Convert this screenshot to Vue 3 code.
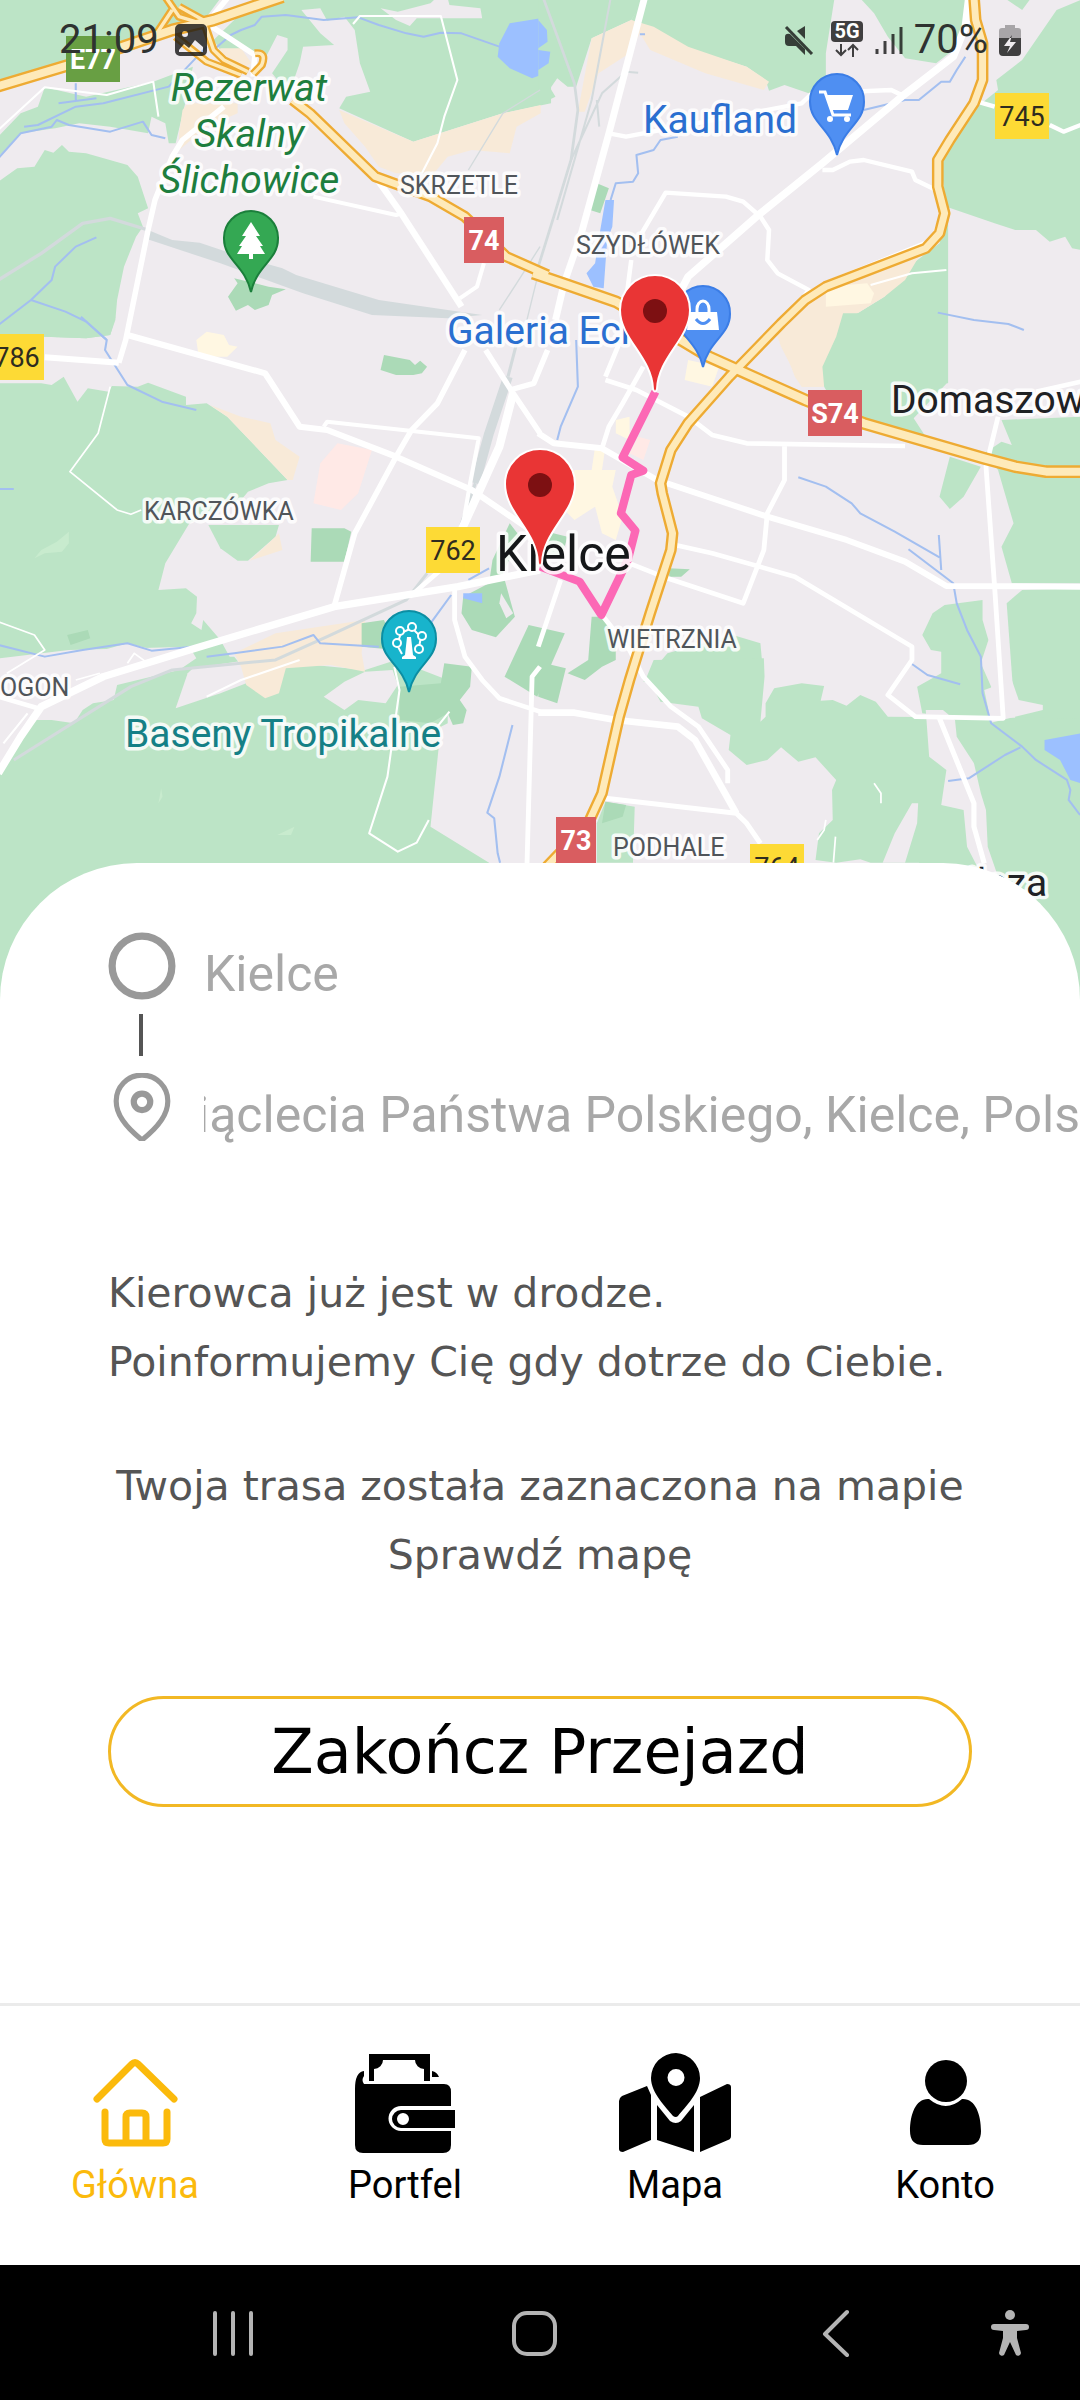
<script setup>
import { ref } from 'vue'

const pickup = ref('Kielce')
const destination = ref('iąclecia Państwa Polskiego, Kielce, Polska')

// Map geometry is stored per tile; each tile has its own origin and scale.
const tiles = {
  a: 'matrix(.3444 0 0 .3333 0 0)',
  b: 'matrix(.3444 0 0 .3333 540 0)',
  c: 'matrix(.3444 0 0 .3333 0 320)',
  d: 'matrix(.3444 0 0 .3333 540 320)',
  e: 'matrix(.3444 0 0 .3333 0 660)',
  f: 'matrix(.3444 0 0 .3333 540 660)',
}

const areas = [
  // north-west
  ['a', 'park', 'M-5-5H640L600 50 480 90 190 200-5 270Z'],
  ['a', 'park', 'M620 120L700 40 820-5H1600V310L1460 340 1200 425 985 325 1005 290 1075 275 1045 190 1030 90 1000 50 950 62 930 25 875 30 930 100 970 135 880 140 870 190 850 250 810 245 790 220 835 150V115L805 105 765 185 730 150H640Z'],
  ['a', 'land', 'M1105 25L1155 35 1250 10 1265-5H1300L1305 15 1395 25 1400 55H1210L1190 78 1150 60Z'],
  ['a', 'park', 'M-5 410L60 340 110 320 130 262 250 290 445 245 560 200 540 300 510 430H490L480 370 440 350 430 400 320 380 230 370 160 385 60 400-5 470Z'],
  ['a', 'park', 'M-5 545L50 505 100 500 130 450 155 458 180 435 200 455 250 460 370 495 400 530 430 625 400 640 415 680 395 710 360 800 340 900 335 960 320 1005 250 1015 130 1010-5 1020Z'],
  ['a', 'sand', 'M530 330L545 310H690V340L600 380 520 450V400ZM640 145H700L730 190 700 205 620 190Z'],
  ['a', 'sand', 'M985 330L1200 425 1460 340 1570 315V340L1500 380 1480 460 1370 450 1300 470 1260 520H1150L1100 500 1060 440 1000 370Z'],
  ['a', 'wood', 'M690 850L680 835 780 860 830 868 790 885 780 915 740 930 720 915 685 932 662 890Z'],
  ['a', 'water', 'M1480 70L1570 55V225L1545 235 1480 205 1445 170 1450 130Z'],
  ['a', 'yard', 'M430 690L500 720 580 728 700 770 820 805 860 825 1100 900 1300 930 1400 945 1300 955 1080 945 880 880 640 790 420 715Z'],
  // north-east
  ['b', 'park', 'M-5-5H305L265 60 150 115 105 260 80 260 50 235 30 265 45 290-5 315Z'],
  ['b', 'park', 'M300-5H855L830 160V270L780 280 710 255 665 272 655 240 600 200 430 145 330 95 265 60Z'],
  ['b', 'sand', 'M265 60L330 80 430 140 600 200 665 245 650 270 480 220 320 150 290 100 260 160 170 220 130 335H110L150 115Z'],
  ['b', 'water', 'M-5 60L20 90 22 125-5 145ZM-5 150L30 155 25 190-5 210Z'],
  ['b', 'park', 'M930-5H1240V60L1200 150 1150 190 1060 175 1010 110 970 40ZM1350-5H1425L1400 30Z'],
  ['b', 'park', 'M1570 0L1500 30 1400 180 1325 240 1330 270 1270 320 1190 430 1165 500 1180 620 1320 670 1380 690H1440L1480 725 1525 710 1545 745 1570 750Z'],
  ['b', 'wood', 'M165 550L200 565 175 640 145 630Z'],
  ['b', 'park', 'M1185 640V1150L860 1150 870 1010 890 960 1000 890 1070 800 1160 730Z'],
  ['b', 'sand', 'M800 870L1100 770 1060 840 1000 890 890 960 865 1100 820 1160H760L700 1040 680 980Z'],
  ['b', 'shop', 'M830 860L950 850 970 880 960 910 830 920Z'],
  ['b', 'water', 'M190 600H215L210 680 195 720 185 865 155 860 135 820 160 790 175 690Z'],
  // centre-west
  ['c', 'park', 'M-5-10H335L320 45 250 55 130 50-5 60Z'],
  ['c', 'park', 'M-5 190H120L150 195 185 170 225 245 255 205 315 215 325 198 400 200 430 188 540 230V255L600 250 660 290 835 480 780 490 720 515 700 540 550 610 480 730 460 810 540 805 572 830 570 880 555 910 585 930 590 900 640 960 680 1035 560 1030 550 1000 450 990 370 970 230 1010 200 1080H-5Z'],
  ['c', 'park', 'M605 615H810L800 650 720 722H690L640 685Z'],
  ['c', 'glade', 'M100 715L120 690 165 665 200 635V670L180 695 130 700Z'],
  ['c', 'wood', 'M905 625H1000L1020 635 1000 725H902ZM1115 105L1190 120 1205 135 1220 122 1240 140 1225 160 1200 165 1150 165 1105 150Z'],
  ['c', 'wood', 'M195 945L255 930 262 955 205 975Z'],
  ['c', 'sand', 'M610 255L700 290 785 310 800 360 870 410 850 480H835L660 290ZM810 640L820 690 725 722 790 660Z'],
  ['c', 'health', 'M980 370L1080 390 1040 520 990 570 910 550 930 430Z'],
  ['c', 'wood', 'M1480 610L1510 650 1460 760 1495 890 1440 952 1370 930 1340 880 1345 830 1420 790 1430 720Z'],
  ['c', 'land', 'M1455 820L1490 880 1470 895 1450 850Z'],
  ['c', 'water', 'M1345 820H1400V850L1345 835Z'],
  ['c', 'shop', 'M570 60L600 35 650 45 665 75 690 80 660 110H600L575 95Z'],
  ['e', 'park', 'M-5 0L560-10 680-10 720 40 830 20 860 10 1060 30 1150 0 1300 60 1300 190 1280 200 1250 500 1420 608V1100H-5Z'],
  ['e', 'land', 'M-5-5L200-30 550-40 570-5 520 30 340 75 330 120 270 130 240 150 215 190 150 180H100L-5 335Z'],
  ['e', 'land', 'M560 25L720 0 715 70 640 100 510 145 545 40Z'],
  ['c', 'sand', 'M680 1000L800 940 1060 900 1050 1000 1060 1055 960 1035 830 1045 810 1120 770 1135 715 1095 700 1040Z'],
  ['e', 'land', 'M1060 35L1140 30 1155 75 1120 130 1040 120 1000 150 940 110 1000 65Z'],
  ['c', 'wood', 'M1050 910L1115 900 1150 990 1050 980Z'],
  ['e', 'wood', 'M1160 80L1280 70 1290 10 1370 20 1365 80 1335 120 1355 150 1345 190 1315 195 1300 160 1250 190 1160 180Z'],
  ['c', 'wood', 'M1535 915L1640 940 1560 1130 1465 1070Z'],
  ['e', 'glade', 'M805 525L855 500 845 525ZM468 385L472 410 460 430Z'],
  // centre-east
  ['d', 'sand', 'M720 0H880L860 50 825 120V200H760L740 170 700 60Z'],
  ['d', 'park', 'M880-20H1181V190L1085 295 1120 350 870 280 825 200 820 140 860 50Z'],
  ['d', 'park', 'M1340 300L1570 290V790H1370L1340 680 1375 610 1330 450 1290 400 1340 365 1370 375ZM1190 410L1280 440 1230 530 1190 567 1160 530Z'],
  ['d', 'park', 'M1400 810L1570 805V1200H1380L1355 850Z'],
  ['d', 'park', 'M1175 855L1285 840V900L1302 960 1280 1030 1310 1100 1300 1200 1110 1180 1095 1100 1165 1060V995L1135 990 1110 945 1140 880Z'],
  ['d', 'park', 'M560 945L640 970 650 1085H300L370 1000Z'],
  ['d', 'wood', 'M150 890H190L220 930V1020L180 1040 130 1080 80 1060 140 1020ZM-5 1025L75 1045 50 1150-5 1130ZM375 745L435 748 410 770H375Z'],
  ['d', 'wood', 'M0 630L80 650 60 720 10 700Z'],
  ['d', 'shop', 'M100 450L220 450 210 500 240 590 220 660 180 640 160 560 100 600 60 560ZM430 120L520 140 500 200 420 180ZM220 300L260 290 260 360 220 340ZM160 380H190L180 450H150Z'],
  ['d', 'health', 'M285 350L320 360 300 420 260 400Z'],
  // south-east
  ['f', 'park', 'M330 0L650-5 652 50 640 185 655 170V130L680 85 760 70 825 78 815 122 850 120 890 137 930 105 975 125 1010 170 1600 175V1100H1200L1100 608H960L930 598 860 608 800 600 810 520 850 480 848 390 860 360 800 292 750 305 700 262 660 300 600 315 548 270 553 225 470 175 460 140 350 125 310 50Z'],
  ['f', 'land', 'M1120 150H1170L1205 180 1210 230 1260 310 1280 400 1295 450 1300 560 1330 650 1270 620 1240 560 1230 450 1165 435 1180 330 1130 290ZM1098 430L1095 490 1060 608H995L1030 520 1080 430ZM1290 90L1370 60 1390 120 1460 135V150L1310 188Z'],
  ['f', 'water', 'M1465 240L1570 220V370L1540 360 1510 300 1465 270Z'],
  ['f', 'park', 'M190 425L275 440 270 608H165V490Z'],
  ['f', 'wood', 'M190 425L250 435 240 470 180 490Z'],
]

const lines = [
  ['a', 'rail', 10, 'M-5 840L120 760 240 670 320 655 430 690'],
  ['b', 'rail', 8, 'M10-5L100 250 110 330 90 480 40 650-5 800'],
  ['b', 'rail', 6, 'M205-5L150 300 50 660M90 480L180 280 250 215 285 218M165 300L172 380'],
  ['a', 'rail', 4, 'M1568 270L1460 340 1360 510M1568 740L1500 850 1450 930M1568 800L1530 960'],
  ['c', 'rail', 28, 'M1475 170L1420 340 1380 490'],
  ['c', 'rail', 9, 'M1500 70L1475 170M1380 490L1330 640M1240 760L1180 840 950 950 800 1020 500 1050 380 1100 40 1320'],
  ['a', 'river', 6, 'M-5 475L60 400 150 380 165 360 200 375 320 395 415 365 440 405 480 415M70 380L110 375 220 320 300 310 490 260 600 140M170 310L280 295M220 300V250M-5 975L90 900 150 840 160 800 220 740 280 712M90 900L190 935 250 965 310 1020'],
  ['a', 'river', 6, 'M620 150L670 105 700 90 740 75 760 50 830 45 940 60 1040 52 1100 75 1180 100 1230 110 1280 98 1340 100 1450 140'],
  ['b', 'river', 6, 'M205 600L220 550 270 545 285 520 280 465 330 450 350 420 400 410M1235 170L1210 210 1190 245H1165L1100 300H1060L940 330M1155 938L1260 960 1360 972 1405 990M290 103H305'],
  ['c', 'river', 6, 'M235-10L310 60 305 90 370 195 470 245 570 270M-5 975L130 1010 240 990 370 970 440 992 580 978M600 1010L680 1000 820 980 910 945 930 970 1100 980M1250 910L1310 825M1360 780L1420 745M-5 507H40'],
  ['e', 'river', 6, 'M1488 195L1450 350 1415 458 1435 475 1445 580 1452 608'],
  ['d', 'river', 6, 'M105 60L110 200 60 320 50 360M750 472L830 500 905 550 930 580 1030 635 1160 712M1070 688L1200 790 1210 850 1240 930 1280 1010 1285 1120 1310 1210 1400 1280 1440 1320 1530 1380 1540 1410 1535 1440 1568 1485M1158 645L1165 750'],
  ['f', 'river', 6, 'M1395 262L1350 285 1245 355 1185 363M1080 12L1125 45 1220 73'],
  ['a', 'road', 6, 'M-5 390L130 262 310 285 445 245 460 350M1025 72L1045 48H1280L1328 240 1290 350 1270 430 1225 520'],
  ['a', 'road', 16, 'M660-5L600 70 740 165 735 230M650 320L530 420 500 470 450 600 430 690 365 1020 345 1088'],
  ['a', 'road', 12, 'M910 590L1150 645 1165 640M1405 790L1385 860 1335 895'],
  ['a', 'road', 19, 'M1100 545L1165 640 1340 920'],
  ['b', 'road', 20, 'M303-5L200 400 120 700 70 850 45 960'],
  ['b', 'road', 22, 'M1245-5L1235 80 1200 170 1050 290 820 490 640 640 430 830 410 870'],
  ['b', 'road', 13, 'M200 400L250 410 300 400 760 310 790 280 1020 270 1050 285M820 510H850L900 485 940 480 1080 515 1090 540 1150 570 1165 650 1140 720 830 850M295 700L365 578 540 590 590 605 640 650 665 690 660 780 690 820 780 870 740 930M265 780L250 900M1270 305L1320 320M1480 375L1520 395 1570 375'],
  ['b', 'road', 6, 'M960 855L1080 820 1180 810'],
  ['c', 'road', 18, 'M130 112L345 128M370 45L770 160 870 320 950 330 1150 410 1370 510 1540 630'],
  ['c', 'road', 16, 'M1350 90L1270 250 1195 330 1150 410 1030 640 970 860M1410 90L1490 220 1568 340M1480 210L1550 190 1590 90'],
  ['c', 'road', 12, 'M940 320L950 305 1390 355 1365 490 1340 640'],
  ['c', 'road', 24, 'M1490 220L1450 380 1380 540 1340 630'],
  ['c', 'road', 22, 'M-5 1360L60 1250 120 1160 300 1070 550 990 970 860 1330 800 1568 750'],
  ['c', 'road', 14, 'M1190 830L1290 740M1320 810V900L1350 1010 1400 1080 1450 1135 1568 1175M1568 1040L1545 1070 1530 1640M-5 1130L110 1165'],
  ['c', 'road', 5, 'M320 200L285 340 203 455 340 570 380 583 410 570M-5 905L100 945 130 990 20 1060M220 1080L290 1060M370 1030L390 1000 430 1030'],
  ['e', 'road', 6, 'M1145 20L1160 90 1125 350 1072 520 1155 575 1210 548 1245 480M600 110L700 60 870 0M1305 155L1270 200M10 250L80 160'],
  ['d', 'road', 18, 'M-5 340L40 370 180 385 340 480 660 590 890 660 1060 725 1180 798 1570 800'],
  ['d', 'road', 14, 'M370 670L500 700 740 770 1080 980V1020L1010 1125 1090 1190 1345 1195 1320 800 1295 440 1330 290M260 730L370 775 590 850 650 690 660 580 710 480V370M190 180L280 210 430 290 500 345 600 370 1060 378M300 140L240 250 200 320 180 385M230 70L190 170M1440 215L1570 185M60 780L-5 980M180 885L260 990 300 1070 380 1160 460 1220 545 1350V1390'],
  ['f', 'road', 20, 'M-5 158L100 158 220 180 400 200 450 240 570 460'],
  ['f', 'road', 15, 'M190 415L570 460 600 490 640 550M1160 175L1260 430V500L1290 610'],
  ['f', 'road', 5, 'M970 370L990 400V430M830 480L825 510 805 540M858 530L852 608'],
]

// Drawn twice: once as the dark casing, once as the pale fill.
const highways = [
  ['a', 24, 'M480-10L520 50 600 75M500 30L455 100M520 20L590 60 620 150 650 180 720 215M740 160Q775 155 760 195L735 222M510 110L600 185 700 225'],
  ['a', 38, 'M-10 260L200 195 500 90 620 60 820-10'],
  ['a', 34, 'M850 300L900 340 1090 530 1250 590 1350 650 1470 770 1590 825'],
  ['d', 38, 'M-20-140L80-105 220-55 410 60 490 110 640 180 770 240 940 310 1290 415 1380 440 1470 455H1580'],
  ['b', 34, 'M1260-10L1265 60 1285 130V240L1260 310 1190 420 1155 480V560L1175 640 1160 700 1120 745 830 860 770 900 700 970 550 1130 430 1270 380 1350 350 1450 355 1480 385 1600 380 1650 320 1840 260 2040 230 2150 180 2380 140 2470 20 2600'],
]

const shields = [
  { text: 'E77', x: 66, y: 36, w: 54, kind: 'green' },
  { text: '74', x: 464, y: 217, w: 40, kind: 'red' },
  { text: 'S74', x: 808, y: 390, w: 54, kind: 'red' },
  { text: '73', x: 556, y: 817, w: 40, kind: 'red' },
  { text: '745', x: 995, y: 93, w: 54, kind: 'yellow' },
  { text: '786', x: -10, y: 334, w: 54, kind: 'yellow' },
  { text: '762', x: 426, y: 527, w: 54, kind: 'yellow' },
  { text: '764', x: 750, y: 844, w: 54, kind: 'yellow' },
]

const labels = [
  { text: 'Rezerwat', x: 249, y: 101, kind: 'nature' },
  { text: 'Skalny', x: 249, y: 147, kind: 'nature' },
  { text: 'Ślichowice', x: 249, y: 193, kind: 'nature' },
  { text: 'SKRZETLE', x: 400, y: 194, kind: 'district' },
  { text: 'SZYDŁÓWEK', x: 576, y: 254, kind: 'district' },
  { text: 'KARCZÓWKA', x: 144, y: 520, kind: 'district' },
  { text: 'WIETRZNIA', x: 607, y: 648, kind: 'district' },
  { text: 'PODHALE', x: 613, y: 856, kind: 'district' },
  { text: 'OGON', x: 0, y: 696, kind: 'district' },
  { text: 'Kaufland', x: 643, y: 133, kind: 'shopping' },
  { text: 'Galeria Echo', x: 447, y: 344, kind: 'shopping' },
  { text: 'Baseny Tropikalne', x: 125, y: 747, kind: 'leisure' },
  { text: 'Domaszowice', x: 891, y: 413, kind: 'village' },
  { text: 'Bilcza', x: 943, y: 896, kind: 'village' },
  { text: 'Kielce', x: 496, y: 571, kind: 'city' },
]
</script>

<template>
  <div class="screen">
    <header class="map-wrap">
      <svg class="map" viewBox="0 0 1080 1000" role="img" aria-label="Mapa trasy">
        <rect class="land" width="1080" height="1000" />
        <path v-for="(a, i) in areas" :key="'a' + i" :class="a[1]" :transform="tiles[a[0]]" :d="a[2]" />
        <g class="lines">
          <path v-for="(l, i) in lines" :key="'l' + i" :class="l[1] + '-line'" :transform="tiles[l[0]]" :stroke-width="l[2]" :d="l[3]" />
          <path v-for="(h, i) in highways" :key="'c' + i" class="casing" :transform="tiles[h[0]]" :stroke-width="h[1]" :d="h[2]" />
          <path v-for="(h, i) in highways" :key="'h' + i" class="highway" :transform="tiles[h[0]]" :stroke-width="h[1] - 14" :d="h[2]" />
          <path class="trip" :transform="tiles.d" d="M335 215L240 412 300 452 265 465 235 580 277 632 255 720 178 885 115 785 0 740" />
        </g>
        <g v-for="s in shields" :key="s.text" class="shield" :class="s.kind">
          <rect :x="s.x" :y="s.y" :width="s.w" height="46" />
          <text :x="s.x + s.w / 2" :y="s.y + 33">{{ s.text }}</text>
        </g>
        <text v-for="l in labels" :key="l.text" class="label" :class="l.kind" :x="l.x" :y="l.y">{{ l.text }}</text>

        <g class="poi" transform="translate(251 211)">
          <path fill="#34a853" stroke="#1b7f3b" d="M0 0a27 27 0 0 1 27 28c0 21-21 26-27 53c-6-27-27-32-27-53a27 27 0 0 1 27-28z" />
          <path fill="#fff" d="M0 11l9 14h-4l7 10h-3l5 8H2v5h-4v-5h-12l5-8h-3l7-10h-4z" />
        </g>
        <g class="poi" transform="translate(837 74)">
          <path fill="#4f8ff2" stroke="#3b7de6" d="M0 0a27 27 0 0 1 27 28c0 21-21 26-27 53c-6-27-27-32-27-53a27 27 0 0 1 27-28z" />
          <path fill="none" stroke="#fff" stroke-width="3" d="M-18 18h6l8 23h18" />
          <path fill="#fff" d="M-10 21h26l-5 15H-5z" />
          <circle cx="-7" cy="45" r="3" fill="#fff" /><circle cx="10" cy="45" r="3" fill="#fff" />
        </g>
        <g class="poi" transform="translate(703 286)">
          <path fill="#4f8ff2" stroke="#3b7de6" d="M0 0a27 27 0 0 1 27 28c0 21-21 26-27 53c-6-27-27-32-27-53a27 27 0 0 1 27-28z" />
          <path fill="#fff" d="M-14 26h28l2 18h-32z" />
          <path fill="none" stroke="#fff" stroke-width="3" d="M-6 29v-6a6 8 0 0 1 12 0v6" />
          <path fill="none" stroke="#4f8ff2" stroke-width="3" d="M-7 33q7 9 14 0" />
        </g>
        <g class="poi" transform="translate(409 611)">
          <path fill="#18b4cc" stroke="#0c8ea3" d="M0 0a27 27 0 0 1 27 28c0 21-21 26-27 53c-6-27-27-32-27-53a27 27 0 0 1 27-28z" />
          <path fill="#fff" d="M-2 26h4l2 18 3 2v2h-14v-2l3-2z" />
          <path fill="none" stroke="#fff" stroke-width="2" d="M-7 43l-5-9 4-12 11-5 9 9-3 15" />
          <g fill="#18b4cc" stroke="#fff" stroke-width="2"><circle cx="-12" cy="32" r="4" /><circle cx="-9" cy="20" r="4" /><circle cx="3" cy="16" r="4" /><circle cx="13" cy="25" r="4" /><circle cx="10" cy="38" r="4" /></g>
        </g>
        <g v-for="m in [[655, 275], [540, 449]]" :key="m[0]" class="marker" :transform="`translate(${m[0]} ${m[1]})`">
          <path d="M0 0A35 35 0 0 1 35 35C35 64 3 82 2 114Q0 119-2 114C-3 82-35 64-35 35A35 35 0 0 1 0 0Z" />
          <circle cy="36" r="12" />
        </g>
      </svg>

      <div class="status">
        <div class="status-group">
          <span class="status-text">21:09</span>
          <svg class="picture" viewBox="0 0 32 32" aria-hidden="true">
            <path fill-rule="evenodd" d="M5 0h22a5 5 0 0 1 5 5v22a5 5 0 0 1-5 5H5a5 5 0 0 1-5-5V5a5 5 0 0 1 5-5zM10 7a3 3 0 1 0 0 6a3 3 0 1 0 0-6zM4 26v2h24v-5l-8-7-6 8-5-4z" />
          </svg>
        </div>
        <div class="status-group right">
          <svg class="mute" viewBox="0 0 30 30" aria-hidden="true">
            <path d="M21 1v13l-8-8zM1 12q0-4 5-3l15 15v6l-9-9H5q-4 0-4-4z" />
            <path d="M2 2l26 27" fill="none" stroke="currentColor" stroke-width="3" />
          </svg>
          <svg class="network" viewBox="0 0 34 38" aria-hidden="true">
            <rect x="1" y="0" width="32" height="21" rx="4" />
            <text x="17" y="17">5G</text>
            <path d="M11 23v11m-5-5l5 5 5-5M23 36V24m-5 5l5-5 5 5" fill="none" stroke="currentColor" stroke-width="2" />
          </svg>
          <svg class="signal" viewBox="0 0 28 30" aria-hidden="true">
            <path d="M2 24v5M10 16v13M18 9v20M26 2v27" fill="none" stroke="currentColor" stroke-width="3" />
          </svg>
          <span class="status-text">70%</span>
          <svg class="battery" viewBox="0 0 22 32" aria-hidden="true">
            <path opacity=".4" d="M6 4V1h10v3h3q3 0 3 3v7H0V7q0-3 3-3z" />
            <path fill-rule="evenodd" d="M0 14h22v14q0 4-4 4H4q-4 0-4-4zM13 11L5 22h6l-3 7 9-11h-6z" />
          </svg>
        </div>
      </div>
    </header>

    <main class="sheet">
      <form class="route" @submit.prevent>
        <label class="stop">
          <svg class="stop-icon" viewBox="0 0 66 66" aria-label="Start"><circle cx="33" cy="33" r="29" stroke-width="7" /></svg>
          <input v-model="pickup" type="text" />
        </label>
        <div class="connector"></div>
        <label class="stop">
          <svg class="stop-icon" viewBox="0 0 66 66" aria-label="Cel">
            <path stroke-width="5" stroke-linejoin="round" d="M33 2A25 25 0 0 1 58 28C58 42 47 54 33 65C19 54 8 42 8 28A25 25 0 0 1 33 2Z" />
            <circle cx="33" cy="28" r="8" stroke-width="6" />
          </svg>
          <input v-model="destination" class="scrolled" type="text" />
        </label>
      </form>

      <div class="message">
        <p>Kierowca już jest w drodze.<br />Poinformujemy Cię gdy dotrze do Ciebie.</p>
        <p class="centered">Twoja trasa została zaznaczona na mapie<br />Sprawdź mapę</p>
      </div>
      <button class="finish" type="button">Zakończ Przejazd</button>
    </main>

    <nav class="tabs">
      <a href="#" class="tab active">
        <svg viewBox="0 0 112 112" aria-hidden="true">
          <g fill="none" stroke="currentColor" stroke-width="7" stroke-linecap="round" stroke-linejoin="round">
            <path d="M18 52L53 17Q56 14 59 17L95 52" />
            <path d="M26 65V92Q26 96 30 96H84Q88 96 88 92V65" />
            <path d="M47 95V70Q47 66 51 66H63Q67 66 67 70V95" />
          </g>
        </svg>
        <span>Główna</span>
      </a>
      <a href="#" class="tab">
        <svg viewBox="0 0 112 112" aria-hidden="true">
          <path d="M20 7H81V34H75V22A9 9 0 0 1 66 13H34A9 9 0 0 1 25 22V34H20ZM83 24Q88 25 90 30H83ZM15 24V29Q12 33 15 37H95Q102 37 102 45V59H52A12 12 0 0 0 52 84H102V98Q102 106 94 106H14Q6 106 6 98V42Q6 25 15 24Z" />
          <path fill-rule="evenodd" d="M52 63H106V81H52A9 9 0 0 1 52 63ZM54 66A6 6 0 1 0 54 78A6 6 0 1 0 54 66Z" />
        </svg>
        <span>Portfel</span>
      </a>
      <a href="#" class="tab">
        <svg viewBox="0 0 112 112" aria-hidden="true">
          <path fill-rule="evenodd" d="M57 6A25 25 0 0 1 81 31C81 46 66 60 59 69Q57 71 54 69C47 60 32 46 32 31A25 25 0 0 1 57 6ZM57 22A8 8 0 1 0 57 39A8 8 0 1 0 57 22Z" />
          <path d="M28 39L32 48V93L4 105Q0 105 0 102V54Q0 51 3 49ZM38 58L51 74Q57 78 62 74L75 58V105L38 93ZM81 50L108 37Q112 37 112 40V89Q112 92 109 93L81 105Z" />
        </svg>
        <span>Mapa</span>
      </a>
      <a href="#" class="tab">
        <svg viewBox="0 0 112 112" aria-hidden="true">
          <circle cx="57" cy="34" r="21" />
          <path d="M40 52Q57 66 73 52C86 51 92 67 92 84Q92 98 79 98H34Q21 98 21 84C21 67 27 51 40 52Z" />
        </svg>
        <span>Konto</span>
      </a>
    </nav>

    <footer class="system">
      <button type="button" aria-label="Ostatnie"><svg viewBox="0 0 48 48"><path d="M6 4v41M24 4v41M42 4v41" /></svg></button>
      <button type="button" aria-label="Ekran główny"><svg viewBox="0 0 48 48"><rect x="4" y="4" width="41" height="41" rx="13" /></svg></button>
      <button type="button" aria-label="Wstecz"><svg viewBox="0 0 48 48"><path d="M36 3L14 25 36 46" /></svg></button>
      <button type="button" aria-label="Dostępność">
        <svg class="filled" viewBox="0 0 48 48">
          <circle cx="24" cy="6" r="5" />
          <path d="M8 15H40A3 3 0 0 1 40 21L31 22V29L35 44A3 3 0 0 1 30 46L24 33 18 46A3 3 0 0 1 13 44L17 29V22L8 21A3 3 0 0 1 8 15Z" />
        </svg>
      </button>
    </footer>
  </div>
</template>

<style>
body {
  margin: 0;
  background: #fff;
}
</style>

<style scoped>
.screen {
  display: flex;
  flex-direction: column;
  min-height: 100vh;
  overflow: hidden;
  background: #fff;
  font-family: Roboto, "Liberation Sans", sans-serif;
}
.map-wrap {
  position: relative;
}
.map {
  display: block;
  width: 100%;
  height: auto;
}
.land { fill: #efebef; }
.park { fill: #bce4c6; }
.wood { fill: #abdab7; }
.glade { fill: #c8ebce; }
.sand { fill: #f8ead8; }
.shop { fill: #fff7e2; }
.health { fill: #ffe9e6; }
.water { fill: #9cc0ff; }
.yard { fill: #d3dadc; }
.lines path {
  fill: none;
  stroke-linejoin: round;
}
.road-line { stroke: #fff; }
.rail-line { stroke: #d3dadc; }
.river-line { stroke: #a3bff0; }
.casing { stroke: #eeab33; }
.highway { stroke: #feeaba; }
.trip {
  stroke: #fc68b5;
  stroke-width: 24;
}
.shield text {
  font-size: 27px;
  text-anchor: middle;
}
.green rect { fill: #689f43; }
.red rect { fill: #d95d60; }
.yellow rect { fill: #fdda35; }
.green text,
.red text {
  fill: #fff;
  font-weight: 700;
}
.yellow text {
  fill: #2f2c1f;
  font-weight: 400;
}
.label {
  font-size: 39px;
  paint-order: stroke;
  stroke: rgba(255, 255, 255, 0.85);
  stroke-width: 7px;
  stroke-linejoin: round;
}
.nature {
  fill: #1e7e3e;
  font-style: italic;
  text-anchor: middle;
}
.district {
  fill: #50555a;
  font-size: 25px;
}
.shopping { fill: #2a6fd0; }
.leisure { fill: #158086; }
.village { fill: #1f2124; }
.city {
  fill: #151719;
  font-size: 50px;
}
.poi > path:first-child { stroke-width: 2; }
.marker path {
  fill: #e93535;
  stroke: #fff;
  stroke-width: 2;
}
.marker circle { fill: #7d1012; }

.status {
  position: absolute;
  inset: 0 0 auto;
  display: flex;
  justify-content: space-between;
  align-items: center;
  height: 80px;
  padding: 0 59px;
  color: rgba(20, 20, 20, 0.8);
}
.status svg { fill: currentColor; }
.status-group {
  display: flex;
  align-items: center;
  gap: 16px;
}
.status-group.right { gap: 11px; }
.status-text {
  font-size: 40px;
  line-height: 46px;
  color: #2e3230;
}
.picture { width: 32px; height: 32px; }
.mute { width: 30px; height: 30px; margin-right: 5px; }
.network { width: 34px; height: 38px; }
.network text {
  fill: #fff;
  font-size: 20px;
  font-weight: 700;
  text-anchor: middle;
}
.signal { width: 28px; height: 30px; }
.battery { width: 22px; height: 32px; }

.sheet {
  position: relative;
  flex: 1;
  margin-top: -137px;
  padding: 69px 108px 196px;
  background: #fff;
  border-radius: 137px 137px 0 0;
}
.route { margin-right: -108px; }
.stop {
  display: flex;
  align-items: center;
  gap: 28px;
  height: 68px;
}
.stop-icon {
  flex: none;
  width: 68px;
  height: 68px;
  fill: none;
  stroke: #999;
}
.stop input {
  flex: 1;
  min-width: 0;
  height: 84px;
  box-sizing: border-box;
  padding: 16px 0 0;
  border: 0;
  outline: 0;
  background: none;
  color: #a8a8a8;
  font: 400 50px Roboto, "Liberation Sans", sans-serif;
}
.stop .scrolled { text-indent: -7px; }
.connector {
  width: 4px;
  height: 42px;
  margin: 14px 0 17px 31px;
  background: #555;
}
.message {
  display: flex;
  flex-direction: column;
  gap: 55px;
  margin: 118px 0 106px;
  color: #555;
  font: 41px/69px "DejaVu Sans", sans-serif;
}
.message p { margin: 0; }
.centered { text-align: center; }
.finish {
  display: block;
  width: 100%;
  height: 111px;
  padding: 0;
  border: 3px solid #f2b824;
  border-radius: 56px;
  background: #fff;
  color: #000;
  font: 62px/72px "DejaVu Sans", sans-serif;
}

.tabs {
  display: flex;
  padding: 41px 0 58px;
  border-top: 3px solid #ebebeb;
  background: #fff;
}
.tab {
  flex: 1;
  display: flex;
  flex-direction: column;
  align-items: center;
  gap: 4px;
  color: #000;
  font-size: 38px;
  line-height: 44px;
  text-decoration: none;
}
.tab.active { color: #fbba0c; }
.tab svg {
  width: 112px;
  height: 112px;
  fill: currentColor;
}
.system {
  display: grid;
  grid-template-columns: repeat(3, 1fr) 48px;
  align-items: center;
  height: 135px;
  padding: 0 46px 0 82px;
  background: #000;
}
.system button {
  display: flex;
  justify-content: center;
  padding: 0;
  border: 0;
  background: none;
}
.system svg {
  width: 48px;
  height: 48px;
  fill: none;
  stroke: #b4b4b4;
  stroke-width: 4;
  stroke-linecap: round;
  stroke-linejoin: round;
}
.system .filled {
  fill: #b4b4b4;
  stroke: none;
}
</style>
